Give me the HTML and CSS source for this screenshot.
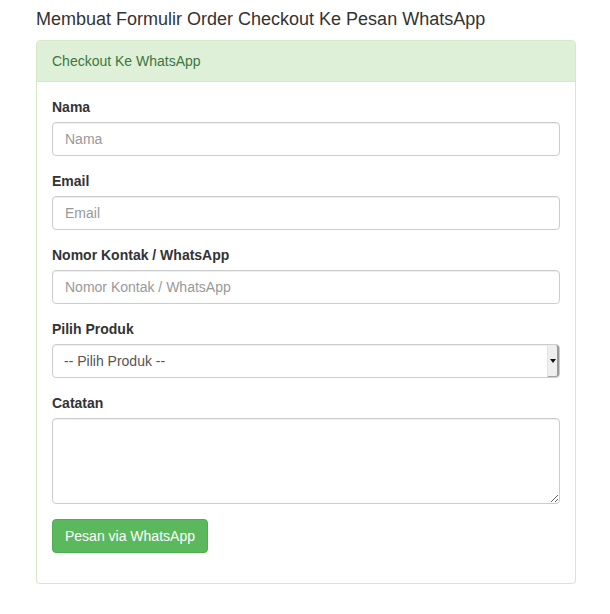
FILE: index.html
```html
<!DOCTYPE html>
<html lang="id">
<head>
<meta charset="utf-8">
<title>Checkout Ke WhatsApp</title>
<link rel="stylesheet" href="styles.css">
</head>
<body>
<div class="page">
  <h4 class="title">Membuat Formulir Order Checkout Ke Pesan WhatsApp</h4>
  <div class="panel">
    <div class="panel-heading">Checkout Ke WhatsApp</div>
    <div class="panel-body">
      <form class="form">
        <div class="form-group">
          <label class="label" for="nama">Nama</label>
          <input class="control" id="nama" type="text" placeholder="Nama">
        </div>
        <div class="form-group">
          <label class="label" for="email">Email</label>
          <input class="control" id="email" type="email" placeholder="Email">
        </div>
        <div class="form-group">
          <label class="label" for="kontak">Nomor Kontak / WhatsApp</label>
          <input class="control" id="kontak" type="text" placeholder="Nomor Kontak / WhatsApp">
        </div>
        <div class="form-group">
          <label class="label" for="produk">Pilih Produk</label>
          <div class="select-wrap">
            <select class="control select" id="produk">
              <option>-- Pilih Produk --</option>
            </select>
            <span class="select-arrow"><span class="tri"></span></span>
          </div>
        </div>
        <div class="form-group">
          <label class="label" for="catatan">Catatan</label>
          <textarea class="control textarea" id="catatan"></textarea>
        </div>
        <div class="form-group">
          <button type="button" class="btn">Pesan via WhatsApp</button>
        </div>
      </form>
    </div>
  </div>
</div>
</body>
</html>
```
FILE: styles.css
```css
* { box-sizing: border-box; }
html, body { margin: 0; padding: 0; background: #fff; }
body {
  font-family: "Liberation Sans", Arial, Helvetica, sans-serif;
  font-size: 14px;
  line-height: 20px;
  color: #333;
}
.page {
  width: 540px;
  margin-left: 36px;
  padding-top: 9px;
}
.title {
  margin: 0 0 11px;
  font-size: 18px;
  font-weight: 500;
  line-height: 20px;
  color: #333;
}
.panel {
  border: 1px solid #d6e9c6;
  border-radius: 4px;
  background: #fff;
  box-shadow: 0 1px 1px rgba(0,0,0,0.05);
}
.panel-heading {
  background: #dff0d8;
  color: #3c763d;
  border-bottom: 1px solid #d6e9c6;
  border-radius: 3px 3px 0 0;
  padding: 10px 15px;
  line-height: 20px;
}
.panel-body { padding: 15px; }
.form { margin: 0; }
.form-group { margin-bottom: 15px; }
.label {
  display: block;
  font-weight: bold;
  margin-bottom: 5px;
}
.control {
  display: block;
  width: 100%;
  height: 34px;
  padding: 6px 12px;
  font-family: inherit;
  font-size: 14px;
  line-height: 20px;
  color: #555;
  background: #fff;
  border: 1px solid #ccc;
  border-radius: 4px;
  box-shadow: inset 0 1px 1px rgba(0,0,0,0.075);
  margin: 0;
}
.control::placeholder { color: #999; }
.select-wrap { position: relative; }
.select {
  -webkit-appearance: none;
  appearance: none;
  padding-left: 11px;
}
.select-arrow {
  position: absolute;
  top: 1px;
  right: 1px;
  width: 12px;
  height: 32px;
  background: #efefef;
  border-left: 1px solid #e2e2e2;
  border-right: 2px solid #9a9a9a;
  border-bottom: 1px solid #a5a5a5;
  border-radius: 0 3px 3px 0;
  display: flex;
  align-items: center;
  justify-content: center;
  pointer-events: none;
}
.tri {
  width: 0;
  height: 0;
  border-left: 3px solid transparent;
  border-right: 3px solid transparent;
  border-top: 4px solid #111;
}
.textarea {
  height: 86px;
  resize: vertical;
}
.btn {
  display: inline-block;
  height: 34px;
  padding: 6px 12px;
  font-family: inherit;
  font-size: 14px;
  line-height: 20px;
  color: #fff;
  background: #5cb85c;
  border: 1px solid #4cae4c;
  border-radius: 4px;
  cursor: pointer;
}
```
